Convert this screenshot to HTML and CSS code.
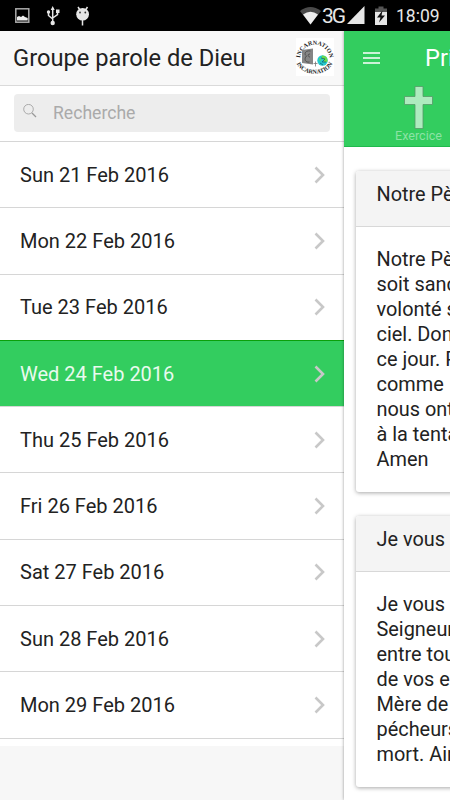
FILE: index.html
```html
<!DOCTYPE html>
<html lang="fr">
<head>
    <meta charset="UTF-8">
    <meta name="viewport" content="width=device-width, initial-scale=1.0">
    <title>Groupe parole de Dieu</title>
    <link rel="stylesheet" href="styles.css">
</head>
<body>
    <div class="status-bar">
        <svg class="status-icons" width="100" height="31" viewBox="0 0 100 31">
            <rect x="15.8" y="8.8" width="13" height="13.4" fill="none" stroke="#aaa" stroke-width="1.5"/>
            <path d="M17 20.5V17l2-1 2 1 2-1.500 2 1.500 2.700 1v2.500z" fill="#eee"/>
            <g fill="none" stroke="#e6e6e6" stroke-width="1.5">
                <path d="M52.700 8v14M48.500 12v3.500l4.200 3.500M57.500 12v2.500L52.700 18"/>
            </g>
            <path d="M50.700 10l2-4 2 4zM56 9.500h3.500v3.500H56z" fill="#e6e6e6"/>
            <circle cx="48.500" cy="12" r="1.700" fill="#e6e6e6"/>
            <circle cx="52.700" cy="23" r="2.200" fill="#e6e6e6"/>
            <path d="M78 7l2 3M87.500 7l-2 3M82.500 20v5.500" stroke="#e6e6e6" stroke-width="1.500"/>
            <ellipse cx="82.600" cy="14.300" rx="6.400" ry="6.300" fill="#e6e6e6"/>
            <circle cx="80" cy="12.500" r=".9" fill="#333"/>
            <circle cx="85.300" cy="12.500" r=".9" fill="#333"/>
        </svg>
        <div class="status-right">
            <svg width="22" height="31" viewBox="0 0 22 31">
                <path d="M0 11Q10.500 3 21 11L10.500 24.500z" fill="#4a4a4a"/>
                <path d="M3 14.500Q10.500 9 18 14.500L10.500 24.500z" fill="#eee"/>
            </svg>
            <span class="network">3G</span>
            <svg width="18" height="31" viewBox="0 0 18 31"><path d="M0 24L17.500 6v18z" fill="#e6e6e6"/></svg>
            <svg class="battery" width="12" height="31" viewBox="0 0 12 31">
                <path d="M0 8.500h3.500V6.500h5v2H12V12H0z" fill="#555"/>
                <path d="M0 12h12v13H0z" fill="#e6e6e6"/>
                <path d="M7.500 10.500L2 17.500h3.500L4 22.500l6-7H6.500z" fill="#111"/>
            </svg>
            <span class="clock">18:09</span>
        </div>
    </div>

    <div class="app">
        <div class="menu">
            <div class="menu-header">
                <h1>Groupe parole de Dieu</h1>
                <svg class="logo" width="38" height="38" viewBox="0 0 38 38">
                    <rect width="38" height="38" fill="#fff"/>
                    <path id="arcTop" d="M4 20A14.800 14.500 0 0 1 33.500 20" fill="none"/>
                    <path id="arcBottom" d="M.5 25.500A19 15 0 0 0 36.500 25.500" fill="none"/>
                    <text class="logo-text"><textPath href="#arcTop" startOffset="50%">INCARNATION</textPath></text>
                    <text class="logo-text"><textPath href="#arcBottom" startOffset="50%">INCARNATION</textPath></text>
                    <path d="M6 12l11-1.500v16L6 25z" fill="#858585"/>
                    <path d="M14.500 13c-5-1-7 3-4 5-3 3-1 7 3 6M14 16c-3 0-2 3 0 3" fill="none" stroke="#444" stroke-width=".8"/>
                    <path d="M19.500 23.500v5M17.500 25.500h4" stroke="#777" stroke-width=".8"/>
                    <circle cx="26.500" cy="22.500" r="5.200" fill="#20c9cf"/>
                    <path d="M26 17.500q6 0 5.500 6l-3 1-1-3-2-1zM23 20l2 1-1 3z" fill="#69d94a"/>
                    <path d="M25 20l4 1-3 3h4M24 25l3 2" fill="none" stroke="#176a70" stroke-width=".8"/>
                </svg>
            </div>
            <div class="search">
                <div class="search-box">
                    <svg width="15" height="15" viewBox="0 0 15 15" fill="none" stroke="#999">
                        <circle cx="5.500" cy="5.200" r="4.800" stroke-width=".8"/>
                        <path d="M9 9l4 4" stroke-width="1.200"/>
                    </svg>
                    <span>Recherche</span>
                </div>
            </div>
            <div class="list">
                <div class="item"><span>Sun 21 Feb 2016</span><svg class="arrow" viewBox="0 0 11 18"><path d="M1.500 1.500L9 9l-7.500 7.500"/></svg></div>
                <div class="item"><span>Mon 22 Feb 2016</span><svg class="arrow" viewBox="0 0 11 18"><path d="M1.500 1.500L9 9l-7.500 7.500"/></svg></div>
                <div class="item"><span>Tue 23 Feb 2016</span><svg class="arrow" viewBox="0 0 11 18"><path d="M1.500 1.500L9 9l-7.500 7.500"/></svg></div>
                <div class="item active"><span>Wed 24 Feb 2016</span><svg class="arrow" viewBox="0 0 11 18"><path d="M1.500 1.500L9 9l-7.500 7.500"/></svg></div>
                <div class="item"><span>Thu 25 Feb 2016</span><svg class="arrow" viewBox="0 0 11 18"><path d="M1.500 1.500L9 9l-7.500 7.500"/></svg></div>
                <div class="item"><span>Fri 26 Feb 2016</span><svg class="arrow" viewBox="0 0 11 18"><path d="M1.500 1.500L9 9l-7.500 7.500"/></svg></div>
                <div class="item"><span>Sat 27 Feb 2016</span><svg class="arrow" viewBox="0 0 11 18"><path d="M1.500 1.500L9 9l-7.500 7.500"/></svg></div>
                <div class="item"><span>Sun 28 Feb 2016</span><svg class="arrow" viewBox="0 0 11 18"><path d="M1.500 1.500L9 9l-7.500 7.500"/></svg></div>
                <div class="item"><span>Mon 29 Feb 2016</span><svg class="arrow" viewBox="0 0 11 18"><path d="M1.500 1.500L9 9l-7.500 7.500"/></svg></div>
            </div>
        </div>

        <div class="content">
            <div class="top">
                <div class="navbar">
                    <svg width="17" height="14" viewBox="0 0 17 14"><path d="M0 2h17M0 7h17M0 12h17" stroke="#fff" stroke-width="1.700"/></svg>
                    <span class="page-title">Pri</span>
                </div>
                <div class="tab">
                    <svg width="30" height="43" viewBox="0 0 30 43"><path d="M11 .5h8v10h9.500v8H19v24h-8v-24H.5v-8H11z" fill="#aeebbf" stroke="#579868" stroke-width=".8"/></svg>
                    <span>Exercice</span>
                </div>
            </div>
            <div class="card">
                <div class="card-title">Notre Pè</div>
                <div class="card-text">
                    Notre Pè<br>
                    soit sanc<br>
                    volonté s<br>
                    ciel. Don<br>
                    ce jour. P<br>
                    comme<br>
                    nous ont<br>
                    à la tenta<br>
                    Amen
                </div>
            </div>
            <div class="card">
                <div class="card-title">Je vous</div>
                <div class="card-text">
                    Je vous<br>
                    Seigneur<br>
                    entre tou<br>
                    de vos e<br>
                    Mère de<br>
                    pécheurs<br>
                    mort. Ain
                </div>
            </div>
        </div>
    </div>
</body>
</html>
```

FILE: styles.css
```css
* {
    box-sizing: border-box;
}

body {
    margin: 0;
    width: 450px;
    height: 800px;
    overflow: hidden;
    font-family: Roboto, sans-serif;
    color: #222;
}

svg {
    display: block;
    flex-shrink: 0;
}

.status-bar {
    display: flex;
    justify-content: space-between;
    height: 31px;
    padding-right: 10px;
    background: #000;
    color: #e6e6e6;
}

.status-right {
    display: flex;
    align-items: center;
}

.network {
    width: 25px;
    font-size: 21px;
    font-weight: 400;
    letter-spacing: -2px;
    padding-top: 1px;
}

.battery {
    margin-left: 10px;
}

.clock {
    width: 44px;
    margin-left: 9px;
    padding-top: 1px;
    font-size: 17.500px;
    white-space: nowrap;
}

.app {
    display: flex;
    height: 769px;
}

.menu {
    width: 344px;
    flex-shrink: 0;
    background: #f7f7f7;
}

.menu-header {
    display: flex;
    justify-content: space-between;
    align-items: center;
    height: 55px;
    padding: 0 10px 2px 13px;
    border-bottom: 1px solid #dadada;
    background: #f8f8f8;
}

h1 {
    margin: 0;
    padding-top: 2px;
    font-size: 23.700px;
    font-weight: 400;
    white-space: nowrap;
}

.logo {
    overflow: visible;
}

.logo-text {
    font-family: "Liberation Serif", serif;
    font-size: 6px;
    font-weight: bold;
    text-anchor: middle;
    fill: #222;
}

.search {
    height: 55px;
    padding: 8px 14px;
    background: #fff;
}

.search-box {
    display: flex;
    align-items: center;
    gap: 15px;
    height: 38px;
    padding: 0 0 1px 9px;
    border-radius: 4px;
    background: #ededed;
    color: #aaa;
    font-size: 17.600px;
}

.search-box svg {
    margin-bottom: 2px;
}

.list {
    padding-bottom: 7px;
    background: #fff;
}

.item {
    display: flex;
    justify-content: space-between;
    align-items: center;
    height: 66.300px;
    padding: 0 19px 0 20px;
    border-top: 1px solid #d6d6d6;
    font-size: 20px;
}

.item:last-child {
    height: 67.300px;
    border-bottom: 1px solid #d6d6d6;
}

.active {
    border-top-color: #0aa00a;
    background: #33cd5f;
    color: #e9faee;
}

.arrow {
    width: 11px;
    height: 18px;
    fill: none;
    stroke: #c8c8c8;
    stroke-width: 2.600;
}

.content {
    flex: 1;
    min-width: 0;
    overflow: hidden;
    background: #fff;
    box-shadow: 0 0 3px rgba(0, 0, 0, 0.4);
}

.top {
    height: 116px;
    border-bottom: 1px solid #20b94d;
    background: #33cd5f;
    color: #fff;
}

.navbar {
    display: flex;
    align-items: center;
    height: 54px;
    padding-left: 19px;
}

.page-title {
    margin-left: 45px;
    font-size: 23.600px;
    font-weight: 400;
}

.tab {
    display: flex;
    flex-direction: column;
    align-items: center;
    width: 61px;
    margin-top: 1px;
    margin-left: 44px;
    color: #8be3a4;
    font-size: 12.600px;
    line-height: 14px;
}

.card {
    width: 120px;
    margin: 24px 0 0 12px;
    border-radius: 3px;
    background: #fff;
    box-shadow: 0 1px 4px rgba(0, 0, 0, 0.35);
    font-size: 19.900px;
    white-space: nowrap;
}

.card-title {
    height: 56px;
    padding-left: 20.500px;
    border-bottom: 1px solid #d8d8d8;
    border-radius: 3px 3px 0 0;
    background: #f4f4f4;
    line-height: 47px;
}

.card-text {
    padding: 20px 0 20px 20.500px;
    line-height: 25px;
}
```
